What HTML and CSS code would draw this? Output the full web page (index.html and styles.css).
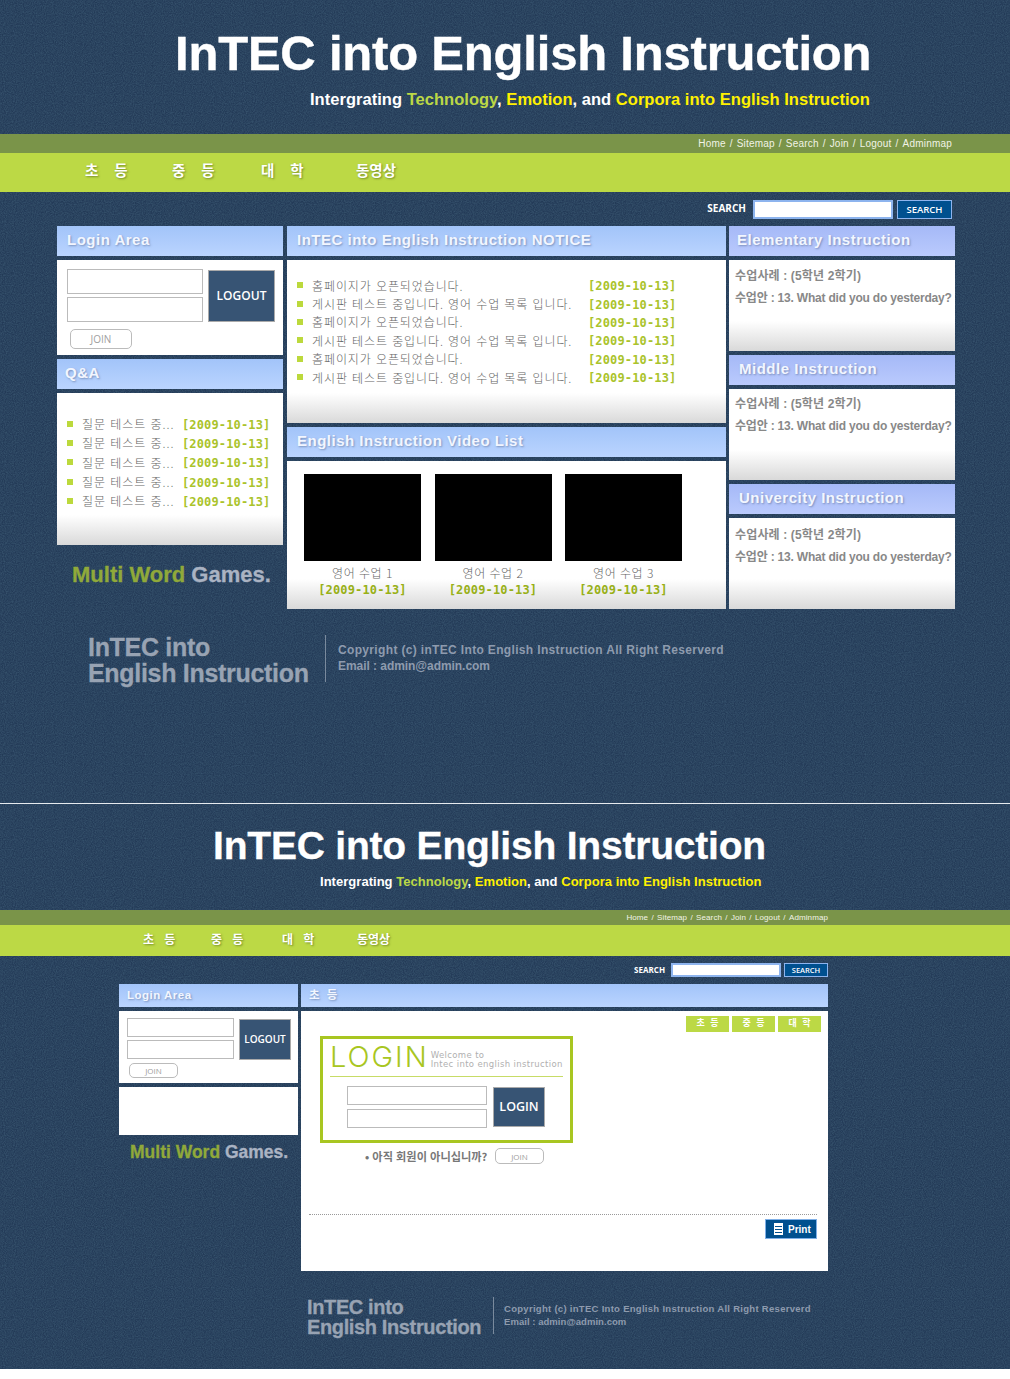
FILE: index.html
```html
<!DOCTYPE html>
<html lang="ko">
<head>
<meta charset="utf-8">
<title>InTEC into English Instruction</title>
<link rel="stylesheet" href="styles.css">
</head>
<body>
<section class="screen screen-main">
  <header class="masthead">
    <h1 class="title">InTEC into English Instruction</h1>
    <p class="tagline">Intergrating <em class="lime">Technology</em>, <em class="yellow">Emotion</em>, and <em class="yellow">Corpora into English Instruction</em></p>
  </header>
  <div class="utility"><span>Home</span><i>/</i><span>Sitemap</span><i>/</i><span>Search</span><i>/</i><span>Join</span><i>/</i><span>Logout</span><i>/</i><span>Adminmap</span></div>
  <nav class="nav"><a>초 등</a><a>중 등</a><a>대 학</a><a>동영상</a></nav>
  <div class="search"><label>SEARCH</label><span class="search-input"></span><button class="search-btn">SEARCH</button></div>
  <div class="columns">
    <div class="col">
      <h2 class="head">Login Area</h2>
      <div class="body login-body">
        <div class="login-form">
          <div class="fields"><span class="field"></span><span class="field"></span></div>
          <button class="logout">LOGOUT</button>
        </div>
        <button class="join">JOIN</button>
      </div>
      <h2 class="head qa-head">Q&amp;A</h2>
      <ul class="body qa-list fade">
        <li><span class="txt">질문 테스트 중...</span><b class="date">[2009-10-13]</b></li>
        <li><span class="txt">질문 테스트 중...</span><b class="date">[2009-10-13]</b></li>
        <li><span class="txt">질문 테스트 중...</span><b class="date">[2009-10-13]</b></li>
        <li><span class="txt">질문 테스트 중...</span><b class="date">[2009-10-13]</b></li>
        <li><span class="txt">질문 테스트 중...</span><b class="date">[2009-10-13]</b></li>
      </ul>
      <p class="games"><span>Multi Word</span> Games.</p>
    </div>
    <div class="col">
      <h2 class="head">InTEC into English Instruction NOTICE</h2>
      <ul class="body notice fade">
        <li><span class="txt">홈페이지가 오픈되었습니다.</span><b class="date">[2009-10-13]</b></li>
        <li><span class="txt">게시판 테스트 중입니다. 영어 수업 목록 입니다.</span><b class="date">[2009-10-13]</b></li>
        <li><span class="txt">홈페이지가 오픈되었습니다.</span><b class="date">[2009-10-13]</b></li>
        <li><span class="txt">게시판 테스트 중입니다. 영어 수업 목록 입니다.</span><b class="date">[2009-10-13]</b></li>
        <li><span class="txt">홈페이지가 오픈되었습니다.</span><b class="date">[2009-10-13]</b></li>
        <li><span class="txt">게시판 테스트 중입니다. 영어 수업 목록 입니다.</span><b class="date">[2009-10-13]</b></li>
      </ul>
      <h2 class="head">English Instruction Video List</h2>
      <div class="body videos fade">
        <figure><div class="thumb"></div><figcaption>영어 수업 1</figcaption><b class="date dark">[2009-10-13]</b></figure>
        <figure><div class="thumb"></div><figcaption>영어 수업 2</figcaption><b class="date dark">[2009-10-13]</b></figure>
        <figure><div class="thumb"></div><figcaption>영어 수업 3</figcaption><b class="date dark">[2009-10-13]</b></figure>
      </div>
    </div>
    <div class="col col-right">
      <h2 class="head violet elementary">Elementary Instruction</h2>
      <div class="body lesson fade"><p>수업사례 : (5학년 2학기)</p><p>수업안 : 13. What did you do yesterday?</p></div>
      <h2 class="head violet">Middle Instruction</h2>
      <div class="body lesson lesson-mid fade"><p>수업사례 : (5학년 2학기)</p><p>수업안 : 13. What did you do yesterday?</p></div>
      <h2 class="head violet">Univercity Instruction</h2>
      <div class="body lesson lesson-last fade"><p>수업사례 : (5학년 2학기)</p><p>수업안 : 13. What did you do yesterday?</p></div>
    </div>
  </div>
  <footer class="foot">
    <div class="foot-logo">InTEC into<br>English Instruction</div>
    <div class="foot-copy"><p>Copyright (c) inTEC Into English Instruction All Right Reserverd</p><p class="email">Email : admin@admin.com</p></div>
  </footer>
</section>

<section class="screen screen-sub">
  <header class="masthead">
    <h1 class="title">InTEC into English Instruction</h1>
    <p class="tagline">Intergrating <em class="lime">Technology</em>, <em class="yellow">Emotion</em>, and <em class="yellow">Corpora into English Instruction</em></p>
  </header>
  <div class="utility"><span>Home</span><i>/</i><span>Sitemap</span><i>/</i><span>Search</span><i>/</i><span>Join</span><i>/</i><span>Logout</span><i>/</i><span>Adminmap</span></div>
  <nav class="nav"><a>초 등</a><a>중 등</a><a>대 학</a><a>동영상</a></nav>
  <div class="search"><label>SEARCH</label><span class="search-input"></span><button class="search-btn">SEARCH</button></div>
  <div class="columns">
    <div class="col">
      <h2 class="head">Login Area</h2>
      <div class="body login-body">
        <div class="login-form">
          <div class="fields"><span class="field"></span><span class="field"></span></div>
          <button class="logout">LOGOUT</button>
        </div>
        <button class="join">JOIN</button>
      </div>
      <div class="body blank"></div>
      <p class="games"><span>Multi Word</span> Games.</p>
    </div>
    <div class="col">
      <h2 class="head head-ko">초 등</h2>
      <div class="body content">
        <div class="tabs"><a>초 등</a><a>중 등</a><a>대 학</a></div>
        <div class="login-box">
          <div class="login-title"><strong>LOGIN</strong><span>Welcome to<br>Intec into english instruction</span></div>
          <div class="login-form">
            <div class="fields"><span class="field"></span><span class="field"></span></div>
            <button class="logout">LOGIN</button>
          </div>
        </div>
        <div class="signup"><span>• 아직 회원이 아니십니까?</span><button class="join">JOIN</button></div>
        <div class="print-row">
          <button class="print">
            <svg width="11" height="12" viewBox="0 0 11 12" aria-hidden="true"><path fill="#fff" d="M1 0h9v12H1z"/><path fill="#00508f" d="M2 3h7v1H2zM2 6h7v1H2zM2 9h7v1H2z"/></svg>
            Print
          </button>
        </div>
      </div>
    </div>
  </div>
  <footer class="foot">
    <div class="foot-logo">InTEC into<br>English Instruction</div>
    <div class="foot-copy"><p>Copyright (c) inTEC Into English Instruction All Right Reserverd</p><p class="email">Email : admin@admin.com</p></div>
  </footer>
</section>
</body>
</html>
```

FILE: styles.css
```css
* { box-sizing: border-box; }
html, body { margin: 0; padding: 0; background: #fff; }
body { width: 1010px; height: 1379px; overflow: hidden; font-family: "Liberation Sans", "Noto Sans CJK KR", sans-serif; }
h1, h2, p, ul, figure { margin: 0; padding: 0; }
ul { list-style: none; }
em { font-style: normal; }
button { font-family: inherit; padding: 0; cursor: pointer; }

.screen {
  background-color: #233a57;
  background-image: url("data:image/svg+xml,%3Csvg xmlns='http://www.w3.org/2000/svg' width='240' height='240'%3E%3Cfilter id='n'%3E%3CfeTurbulence type='fractalNoise' baseFrequency='.9' numOctaves='2' stitchTiles='stitch'/%3E%3CfeColorMatrix values='0 0 0 0 .16 0 0 0 0 .33 0 0 0 0 .42 0 0 0 .4 -.1'/%3E%3C/filter%3E%3Crect width='240' height='240' filter='url(%23n)'/%3E%3C/svg%3E");
}
.screen-main { height: 803px; }
.screen-sub { height: 566px; border-top: 1px solid #e6eaee; }

/* masthead */
.title { color: #fff; font-weight: 700; white-space: nowrap; }
.tagline { color: #fff; font-weight: 700; white-space: nowrap; }
.lime { color: #bcd846; }
.yellow { color: #fff000; }
.utility { display: flex; justify-content: flex-end; align-items: center; background: #7a9449; color: #f1f3e6; }
.nav { display: flex; background: #bcd945; align-items: center; }
.nav a { color: #fff; font-weight: 700; text-shadow: 1px 1px 2px rgba(90,110,30,.7); white-space: nowrap; }
.search { display: flex; justify-content: flex-end; align-items: center; }
.search label { color: #fff; font-family: "Open Sans", sans-serif; font-weight: 700; }
.search-input { display: block; background: #fff; border: 2px solid #8db4ee; }
.search-btn { background: #00508f; color: #fff; border: 1px solid #8db4ee; font-family: "Open Sans", sans-serif; font-weight: 600; }

/* columns */
.columns { display: grid; }
.col { display: flex; flex-direction: column; }
.head {
  background: linear-gradient(#a2c4f9, #bad4ff);
  color: #f2f6ff;
  font-weight: 700;
  text-shadow: 1px 1px 2px rgba(80,100,140,.55);
  white-space: nowrap;
}
.head.violet { background: linear-gradient(#a5b9f7, #bacafd); }
.body { background: #fff; }
.fade { background: linear-gradient(#fff calc(100% - 30px), #d9d9d9 100%); }

/* login */
.login-form { display: flex; }
.fields { display: flex; flex-direction: column; }
.field { display: block; border: 1px solid #bbb; background: #fff; }
.logout { background: #375474; color: #fff; border: 1px solid #aaa; font-family: "Open Sans", sans-serif; font-weight: 600; padding-bottom: 2px; }
.join { display: block; background: #fff; color: #a0a0a0; border: 1px solid #bbb; border-radius: 5px; font-family: "Open Sans", sans-serif; }

/* lists */
.txt { color: #666; font-family: "Noto Sans CJK KR", sans-serif; font-weight: 300; white-space: nowrap; }
.date { font-family: "DejaVu Sans Mono", monospace; font-weight: 700; color: #aac32b; white-space: nowrap; font-size: 12px; letter-spacing: .15px; }
.date.dark { color: #98b017; }
.notice li, .qa-list li { display: flex; align-items: center; }
.notice .date, .qa-list .date { margin-top: 2px; }
.notice li::before, .qa-list li::before { content: ""; width: 6px; height: 6px; background: #bcd93c; flex: none; }
.thumb { background: #000; }
.videos figure { display: flex; flex-direction: column; align-items: center; }
figcaption { color: #666; font-family: "Noto Sans CJK KR", sans-serif; font-weight: 300; }
.lesson p { color: #888; font-weight: 700; white-space: nowrap; letter-spacing: .15px; }
.lesson p:last-child { letter-spacing: -.2px; }

.games { color: #aab3c3; font-weight: 700; white-space: nowrap; -webkit-text-stroke: .3px currentColor; }
.games span { color: #90a93a; }
.foot { display: flex; align-items: flex-start; }
.foot-logo { color: #98a3b3; font-weight: 700; white-space: nowrap; -webkit-text-stroke: .3px currentColor; }
.foot-copy { color: #8e9bae; font-weight: 700; white-space: nowrap; border-left: 1px solid #7a8a9d; }

/* main screen */
.screen-main .masthead { height: 134px; padding: 26px 0 0 175px; }
.screen-main .title { font-size: 49px; line-height: 54px; letter-spacing: -.2px; -webkit-text-stroke: .4px #fff; }
.screen-main .tagline { font-size: 16.5px; line-height: 22px; letter-spacing: .03px; margin: 8px 0 0 135px; }
.screen-main .utility { height: 19px; padding-right: 58px; font-size: 10px; letter-spacing: .2px; }
.screen-main .utility i { font-style: normal; margin: 0 4px; }
.screen-main .nav { height: 39px; padding: 0 0 6px 85px; font-size: 14.5px; }
.screen-main .nav a { word-spacing: 12px; }
.screen-main .nav a:nth-child(1) { width: 87px; }
.screen-main .nav a:nth-child(2) { width: 89px; }
.screen-main .nav a:nth-child(3) { width: 95px; }
.screen-main .search { height: 34px; padding-right: 58px; }
.screen-main .search label { font-size: 10px; margin: -2px 7px 0 0; }
.screen-main .search-input { width: 140px; height: 19px; margin-right: 4px; }
.screen-main .search-btn { width: 55px; height: 19px; font-size: 9.5px; }
.screen-main .columns { grid-template-columns: 226px 439px 226px; column-gap: 4px; padding-left: 57px; }
.screen-main .col-right { margin: 0 1px 0 -1px; }
.screen-main .head { height: 30px; line-height: 28px; padding-left: 10px; font-size: 15px; letter-spacing: .5px; }
.screen-main .elementary { padding-left: 8px; }
.screen-main .qa-head { padding-left: 8px; }
.screen-main .body { margin-top: 4px; margin-bottom: 4px; }
.screen-main .login-body { height: 95px; padding: 9px 0 0 10px; }
.screen-main .fields { gap: 3px; }
.screen-main .field { width: 136px; height: 25px; }
.screen-main .logout { width: 67px; height: 52px; margin: 1px 0 0 5px; font-size: 12px; }
.screen-main .join { width: 62px; height: 20px; margin: 7px 0 0 3px; font-size: 10px; }
.screen-main .qa-list { height: 152px; padding: 21px 0 0 10px; }
.screen-main .qa-list li { height: 19.3px; }
.screen-main .qa-list .txt { width: 100px; margin-left: 9px; font-size: 12px; letter-spacing: .95px; }
.screen-main .notice { height: 163px; padding: 16px 0 0 10px; }
.screen-main .notice li { height: 18.4px; }
.screen-main .notice .txt { width: 276px; margin-left: 9px; font-size: 12px; letter-spacing: .9px; }
.screen-main .videos { height: 148px; padding: 13px 0 0 17px; display: flex; gap: 13.5px; margin-bottom: 0; }
.screen-main .videos figure { width: 117px; }
.screen-main .videos .date { margin-top: 1px; }
.screen-main .thumb { width: 117px; height: 87px; }
.screen-main figcaption { font-size: 12px; line-height: 18px; margin-top: 3px; letter-spacing: .5px; }
.screen-main .lesson { height: 91px; padding: 5px 0 0 6px; font-size: 12px; }
.screen-main .lesson-mid { padding-top: 4px; }
.screen-main .lesson-last { padding-top: 6px; margin-bottom: 0; }
.screen-main .lesson p { line-height: 22px; }
.screen-main .games { font-size: 22px; line-height: 26px; margin: 13px 0 0 15px; }
.screen-main .foot { padding: 25px 0 0 88px; }
.screen-main .foot-logo { font-size: 25px; line-height: 26px; width: 237px; letter-spacing: -.3px; }
.screen-main .foot-copy { margin-top: 1px; height: 47px; padding: 7px 0 0 12px; font-size: 12px; line-height: 16px; letter-spacing: .34px; }
.screen-main .email { letter-spacing: -.05px; }

/* sub screen */
.screen-sub .masthead { height: 106px; padding: 20px 0 0 213px; }
.screen-sub .title { font-size: 39px; line-height: 44px; letter-spacing: -.2px; -webkit-text-stroke: .3px #fff; }
.screen-sub .tagline { font-size: 13px; line-height: 18px; letter-spacing: .03px; margin: 5px 0 0 107px; }
.screen-sub .utility { height: 15px; padding-right: 182px; font-size: 8px; letter-spacing: .1px; }
.screen-sub .utility i { font-style: normal; margin: 0 3.3px; }
.screen-sub .nav { height: 31px; padding: 0 0 4px 143px; font-size: 12px; gap: 34px; }
.screen-sub .nav a { word-spacing: 7px; width: 34px; }
.screen-sub .nav a:nth-child(3) { margin-left: 3px; margin-right: 7px; }
.screen-sub .search { height: 28px; padding-right: 182px; }
.screen-sub .search label { font-size: 8px; margin: -2px 6px 0 0; }
.screen-sub .search-input { width: 110px; height: 14px; margin-right: 3px; }
.screen-sub .search-btn { width: 44px; height: 14px; font-size: 7.5px; }
.screen-sub .columns { grid-template-columns: 179px 527px; column-gap: 3px; padding-left: 119px; }
.screen-sub .head { height: 23px; line-height: 22px; padding-left: 8px; font-size: 11.5px; letter-spacing: .5px; }
.screen-sub .head-ko { word-spacing: 3px; }
.screen-sub .body { margin-top: 4px; }
.screen-sub .login-body { height: 72px; padding: 7px 0 0 8px; }
.screen-sub .fields { gap: 3px; }
.screen-sub .field { width: 107px; height: 19px; }
.screen-sub .logout { width: 52px; height: 41px; margin: 1px 0 0 5px; font-size: 10px; }
.screen-sub .join { width: 49px; height: 15px; margin: 3px 0 0 2px; font-size: 8px; }
.screen-sub .blank { height: 48px; }
.screen-sub .games { font-size: 17.5px; line-height: 20px; margin: 7px 0 0 11px; }
.content { height: 260px; padding: 5px 11px 0 8px; }
.tabs { display: flex; justify-content: flex-end; gap: 3px; margin-right: -4px; }
.tabs a { width: 43px; height: 16px; background: #bcd945; color: #fff; font-size: 9px; font-weight: 700; line-height: 15px; text-align: center; word-spacing: 3px; }
.login-box { width: 253px; height: 107px; margin: 4px 0 0 11px; border: 3px solid #a8c621; padding: 0 7px; }
.login-title { display: flex; align-items: flex-end; height: 38px; border-bottom: 1px solid #c7dc66; padding-bottom: 5px; }
.login-title strong { font-family: "Inter", sans-serif; font-weight: 300; font-size: 29px; line-height: 28px; letter-spacing: 2px; color: #a8c621; }
.login-title span { font-family: "DejaVu Sans", sans-serif; font-size: 8.5px; line-height: 9px; color: #b0b0b0; margin: 0 0 2px 2px; white-space: nowrap; letter-spacing: .35px; }
.login-box .login-form { margin: 9px 0 0 17px; }
.login-box .fields { gap: 4px; }
.login-box .field { width: 140px; height: 19px; }
.login-box .logout { width: 52px; height: 40px; margin: 1px 0 0 6px; font-size: 12.5px; }
.signup { display: flex; align-items: center; margin: 5px 0 0 56px; color: #777; font-size: 11.2px; font-weight: 700; font-family: "Noto Sans CJK KR", sans-serif; }
.signup span { white-space: nowrap; width: 130px; }
.screen-sub .signup .join { width: 49px; height: 16px; margin: 0; font-size: 8px; font-weight: 400; }
.print-row { display: flex; justify-content: flex-end; margin-top: 50px; padding-top: 4px; border-top: 1px dotted #999; }
.print { display: flex; align-items: center; gap: 4px; width: 52px; height: 20px; padding-left: 7px; background: #00508f; border: 1px solid #7fb0e8; color: #fff; font-size: 10px; font-weight: 700; }
.screen-sub .foot { padding: 26px 0 0 307px; }
.screen-sub .foot-logo { font-size: 20px; line-height: 20px; width: 186px; letter-spacing: -.37px; }
.screen-sub .foot-copy { height: 37px; padding: 5px 0 0 10px; font-size: 9.5px; line-height: 13px; letter-spacing: .29px; }
.screen-sub .email { letter-spacing: .05px; }
```
